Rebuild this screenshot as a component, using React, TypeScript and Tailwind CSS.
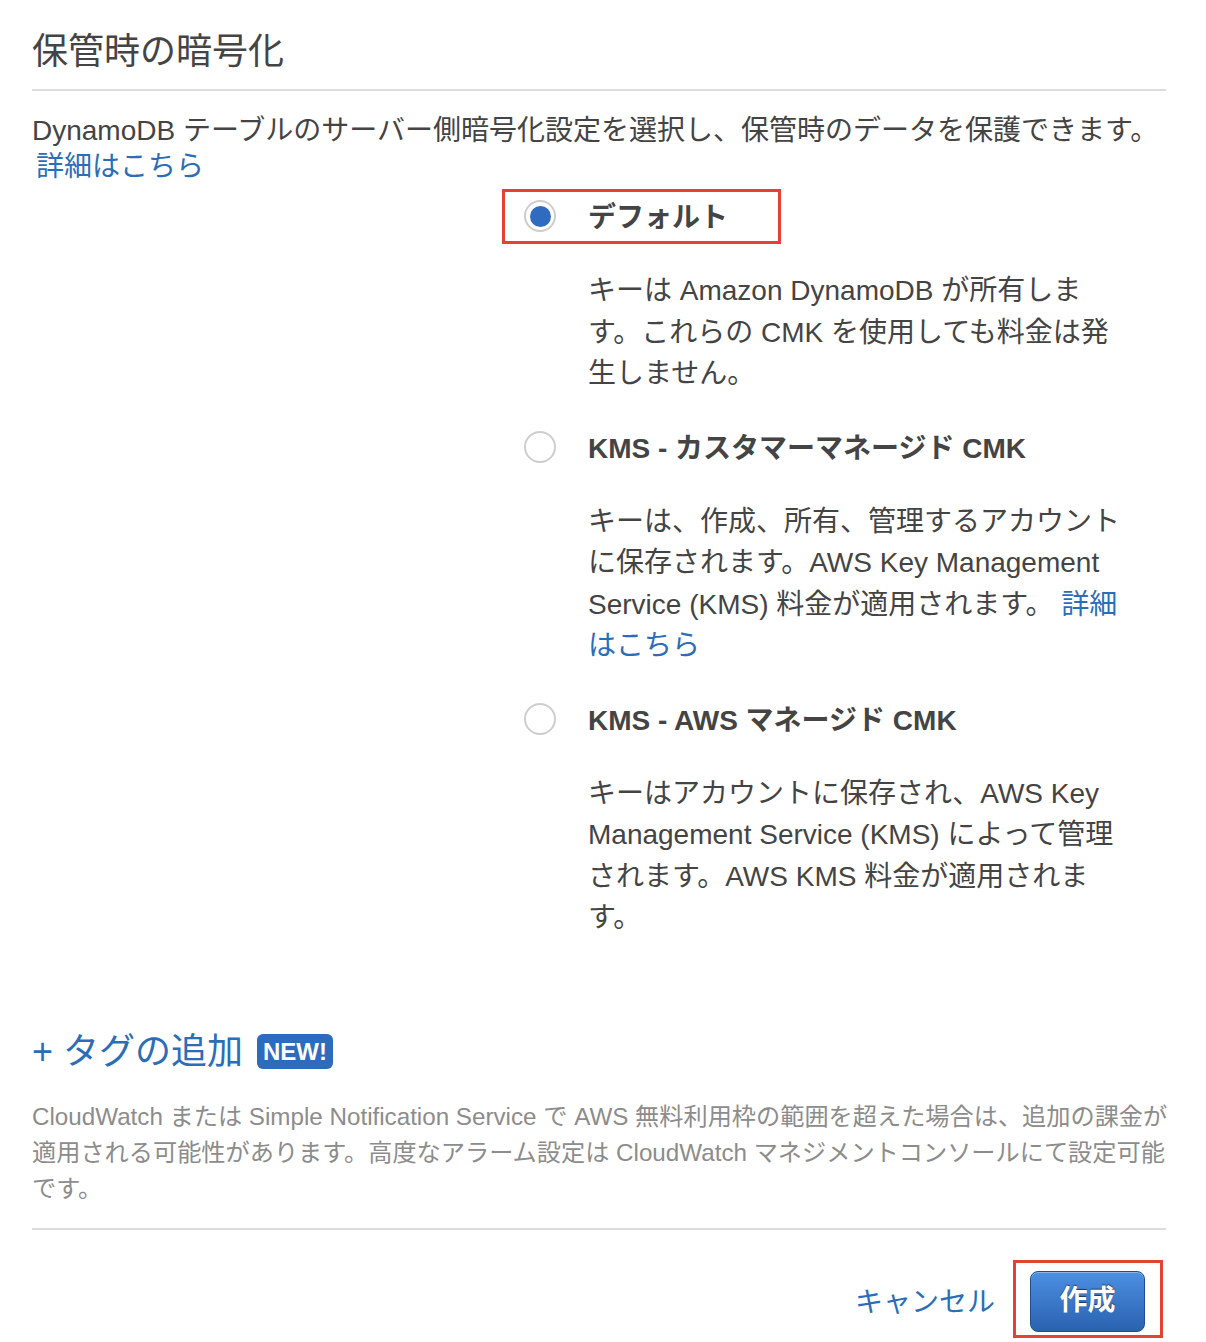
import React from "react";

const font = {
  fontFamily: '"Liberation Sans", "Noto Sans CJK JP", sans-serif',
};

type Option = {
  id: string;
  label: string;
  checked?: boolean;
  desc: React.ReactNode;
};

const Radio = ({ checked }: { checked?: boolean }) => (
  <span className="flex h-[32px] w-[32px] shrink-0 items-center justify-center rounded-full border-2 border-[#cdcdcd] bg-white">
    {checked && <span className="h-[21px] w-[21px] rounded-full bg-[#2f6bbf]" />}
  </span>
);

const options: Option[] = [
  {
    id: "default",
    label: "デフォルト",
    checked: true,
    desc: (
      <>
        キーは Amazon DynamoDB が所有しま
        <br />
        す。これらの CMK を使用しても料金は発
        <br />
        生しません。
      </>
    ),
  },
  {
    id: "customer",
    label: "KMS - カスタマーマネージド CMK",
    desc: (
      <>
        キーは、作成、所有、管理するアカウント
        <br />
        に保存されます。AWS Key Management
        <br />
        Service (KMS) 料金が適用されます。{" "}
        <a href="#" className="text-[#2c6db8]">
          詳細
          <br />
          はこちら
        </a>
      </>
    ),
  },
  {
    id: "aws",
    label: "KMS - AWS マネージド CMK",
    desc: (
      <>
        キーはアカウントに保存され、AWS Key
        <br />
        Management Service (KMS) によって管理
        <br />
        されます。AWS KMS 料金が適用されま
        <br />
        す。
      </>
    ),
  },
];

export default function App() {
  return (
    <div className="min-h-[1342px] w-[1206px] bg-white text-[#444]" style={font}>
      <div className="ml-[32px] w-[1134px]">
        <h2 className="mt-[30px] text-[36px] font-normal leading-[44px] text-[#444]">
          保管時の暗号化
        </h2>
        <div className="mt-[15px] h-[2px] bg-[#dddddd]" />

        <p className="mt-[22px] text-[28px] leading-[36px]">
          <span className="whitespace-nowrap">
            DynamoDB テーブルのサーバー側暗号化設定を選択し、保管時のデータを保護できます。
          </span>
          <br />
          <a href="#" className="ml-[4px] text-[#2c6db8]">
            詳細はこちら
          </a>
        </p>

        <div className="ml-[492px] mt-[9px] flex flex-col gap-[30px]">
          {options.map((o) => (
            <div key={o.id}>
              <div className="relative flex h-[44px] items-center gap-[32px]">
                <Radio checked={o.checked} />
                <span className="whitespace-nowrap pt-[4px] text-[28px] font-bold text-[#444]">
                  {o.label}
                </span>
                {o.checked && (
                  <span className="pointer-events-none absolute -left-[22px] -top-[5px] h-[55px] w-[279px] border-[3px] border-[#e4432d]" />
                )}
              </div>
              <p className="mt-[32px] whitespace-nowrap pl-[64px] text-[28px] leading-[41.5px] text-[#444]">
                {o.desc}
              </p>
            </div>
          ))}
        </div>

        <div className="mt-[91px] flex h-[44px] items-center">
          <a href="#" className="text-[36px] leading-[44px] text-[#2c6db8]">
            + タグの追加
          </a>
          <span className="ml-[14px] flex h-[35px] items-center rounded-[6px] bg-[#2d6bbd] px-[6px] text-[24px] font-bold text-white">
            NEW!
          </span>
        </div>

        <p className="mt-[25px] whitespace-nowrap text-[24.2px] leading-[36px] text-[#8c8c8c]">
          CloudWatch または Simple Notification Service で AWS 無料利用枠の範囲を超えた場合は、追加の課金が
          <br />
          適用される可能性があります。高度なアラーム設定は CloudWatch マネジメントコンソールにて設定可能
          <br />
          です。
        </p>

        <div className="mt-[21px] h-[2px] bg-[#dddddd]" />

        <div className="mt-[41px] flex items-center justify-end pr-[21px]">
          <a href="#" className="mr-[35px] pt-[4px] text-[28px] text-[#2c6db8]">
            キャンセル
          </a>
          <div className="relative">
            <button className="flex h-[61px] w-[115px] items-center justify-center rounded-[8px] border border-[#1f4f92] bg-gradient-to-b from-[#4d8fe2] to-[#2a62b0] text-[28px] font-bold text-white shadow-[inset_0_1px_0_rgba(255,255,255,0.35)] [text-shadow:0_-1px_1px_rgba(0,0,0,0.55)]">
              作成
            </button>
            <span className="pointer-events-none absolute -left-[17px] -top-[11px] h-[78px] w-[150px] border-[3px] border-[#e4432d]" />
          </div>
        </div>
      </div>
    </div>
  );
}
